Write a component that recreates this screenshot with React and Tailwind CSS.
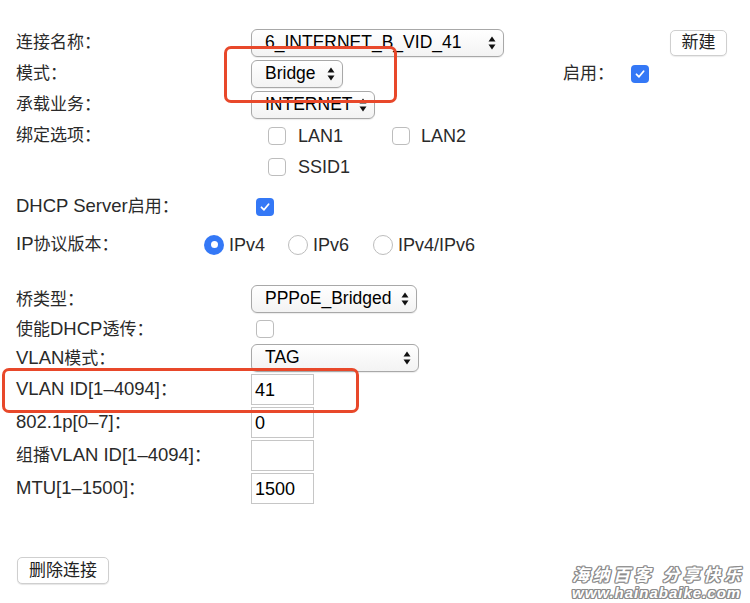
import React from 'react';

const font = 'font-["Liberation_Sans","Noto_Sans_CJK_SC",sans-serif]';

// Latin runs are set a little larger than the CJK glyphs, as the original font does
function Mixed({ text, latin = 'text-[18.5px]' }) {
    const parts = text.match(/[\x20-\x7e\u2013]+|[^\x20-\x7e\u2013]+/g) || [];
    return parts.map((p, i) =>
        /^[\x20-\x7e\u2013]+$/.test(p) ? (
            <span key={i} className={latin}>{p}</span>
        ) : (
            <span key={i}>{p}</span>
        )
    );
}

function Arrows() {
    return (
        <svg width="8" height="14" viewBox="0 0 8 14" className="shrink-0">
            <path d="M4 0.5 L7.5 5.5 L0.5 5.5 Z" fill="#111" />
            <path d="M4 13.5 L7.5 8.5 L0.5 8.5 Z" fill="#111" />
        </svg>
    );
}

function Select({ value, width }) {
    return (
        <div
            className="flex items-center justify-between h-[28px] rounded-[6px] border border-[#a8a8a8] bg-gradient-to-b from-white to-[#f3f3f3] shadow-[0_1px_1px_rgba(0,0,0,0.08)] pl-[13px] pr-[7px] text-[17.5px] text-black leading-none"
            style={{ width }}
        >
            <span>{value}</span>
            <Arrows />
        </div>
    );
}

function Checkbox({ checked }) {
    if (checked) {
        return (
            <div className="w-[18px] h-[18px] rounded-[4px] bg-[#3478f6] flex items-center justify-center shrink-0">
                <svg width="12" height="12" viewBox="0 0 12 12">
                    <path d="M2.5 6.3 L5 8.8 L9.6 3.2" fill="none" stroke="white" strokeWidth="1.8" strokeLinecap="round" strokeLinejoin="round" />
                </svg>
            </div>
        );
    }
    return <div className="w-[18px] h-[18px] rounded-[4px] border border-[#bdbdbd] bg-white shrink-0" />;
}

function Radio({ checked }) {
    if (checked) {
        return (
            <div className="w-[20px] h-[20px] rounded-full bg-[#3478f6] flex items-center justify-center shrink-0">
                <div className="w-[7px] h-[7px] rounded-full bg-white" />
            </div>
        );
    }
    return <div className="w-[20px] h-[20px] rounded-full border border-[#bdbdbd] bg-white shrink-0" />;
}

function Input({ value }) {
    return (
        <div className="w-[63px] h-[31px] border border-[#c6c6c6] bg-white flex items-center pl-[3px] text-[18px] text-black leading-none">
            {value}
        </div>
    );
}

function Label({ text = '', w = 'w-[235px]' }) {
    return (
        <div className={`${w} shrink-0 text-[17px] text-[#2a2a2a] leading-none whitespace-nowrap`}>
            <Mixed text={text} />
        </div>
    );
}

function Option({ text }) {
    return <span className="text-[18px] text-[#2a2a2a] leading-none">{text}</span>;
}

export default function App() {
    return (
        <div className={`relative w-[750px] h-[603px] bg-white overflow-hidden ${font}`}>
            <div className="pt-[27px] pl-4 pr-[23px]">
                {/* 连接名称 */}
                <div className="flex items-center h-[31px]">
                    <Label text="连接名称：" />
                    <Select value="6_INTERNET_B_VID_41" width={253} />
                    <button className="ml-auto h-[26px] w-[57px] rounded-[5px] border border-[#cfcfcf] bg-white shadow-[0_1px_1px_rgba(0,0,0,0.08)] text-[17px] text-[#222] leading-none">
                        新建
                    </button>
                </div>

                {/* 模式 */}
                <div className="flex items-center h-[31px]">
                    <Label text="模式：" />
                    <Select value="Bridge" width={92} />
                    <div className="ml-[220px] w-[68px] text-[17px] text-[#2a2a2a] leading-none">启用：</div>
                    <Checkbox checked />
                </div>

                {/* 承载业务 */}
                <div className="flex items-center h-[31px]">
                    <Label text="承载业务：" />
                    <Select value="INTERNET" width={124} />
                </div>

                {/* 绑定选项 */}
                <div className="flex items-center h-[31px]">
                    <Label text="绑定选项：" />
                    <div className="ml-[17px] w-[124px] flex items-center gap-[12px]">
                        <Checkbox />
                        <Option text="LAN1" />
                    </div>
                    <div className="flex items-center gap-[11px]">
                        <Checkbox />
                        <Option text="LAN2" />
                    </div>
                </div>
                <div className="flex items-center h-[31px]">
                    <Label />
                    <div className="ml-[17px] flex items-center gap-[12px]">
                        <Checkbox />
                        <Option text="SSID1" />
                    </div>
                </div>

                {/* DHCP Server */}
                <div className="flex items-center h-[31px] mt-[9px]">
                    <Label w="w-[240px]" text="DHCP Server启用：" />
                    <Checkbox checked />
                </div>

                {/* IP协议版本 */}
                <div className="flex items-center h-[31px] mt-[7px]">
                    <Label w="w-[188px]" text="IP协议版本：" />
                    <div className="w-[84px] flex items-center gap-[5px]">
                        <Radio checked />
                        <Option text="IPv4" />
                    </div>
                    <div className="w-[85px] flex items-center gap-[5px]">
                        <Radio />
                        <Option text="IPv6" />
                    </div>
                    <div className="flex items-center gap-[5px]">
                        <Radio />
                        <Option text="IPv4/IPv6" />
                    </div>
                </div>

                {/* 桥类型 */}
                <div className="flex items-center h-[30px] mt-[24px]">
                    <Label text="桥类型：" />
                    <Select value="PPPoE_Bridged" width={166} />
                </div>
                <div className="flex items-center h-[30px]">
                    <Label w="w-[240px]" text="使能DHCP透传：" />
                    <Checkbox />
                </div>
                <div className="flex items-center h-[28px]">
                    <Label text="VLAN模式：" />
                    <Select value="TAG" width={168} />
                </div>

                {/* 输入项 */}
                <div className="mt-[1px]">
                    <div className="flex items-center h-[33px]">
                        <Label text="VLAN ID[1–4094]：" />
                        <Input value="41" />
                    </div>
                    <div className="flex items-center h-[33px]">
                        <Label text="802.1p[0–7]：" />
                        <Input value="0" />
                    </div>
                    <div className="flex items-center h-[33px]">
                        <Label text="组播VLAN ID[1–4094]：" />
                        <Input value="" />
                    </div>
                    <div className="flex items-center h-[33px]">
                        <Label text="MTU[1–1500]：" />
                        <Input value="1500" />
                    </div>
                </div>

                <button className="mt-[52px] ml-[1px] h-[27px] w-[92px] rounded-[5px] border border-[#cfcfcf] bg-white shadow-[0_1px_1px_rgba(0,0,0,0.1)] text-[17px] text-[#222] leading-none">
                    删除连接
                </button>
            </div>

            {/* 红框标注 */}
            <div className="absolute left-[224px] top-[46px] w-[173px] h-[57px] rounded-[7px] border-[3px] border-[#e8482a]" />
            <div className="absolute left-[2px] top-[368px] w-[357px] h-[45px] rounded-[7px] border-[3px] border-[#e8482a]" />

            {/* 水印 */}
            <div className="absolute left-[572px] top-[567px] italic font-bold text-white leading-none [text-shadow:1.2px_0_#8c8c8c,-1.2px_0_#8c8c8c,0_1.2px_#8c8c8c,0_-1.2px_#8c8c8c,1px_1px_#8c8c8c,-1px_-1px_#8c8c8c,1px_-1px_#8c8c8c,-1px_1px_#8c8c8c]">
                <div className="text-[17px] tracking-[3.5px]">海纳百客 分享快乐</div>
                <div className="text-[15px] tracking-[1px] mt-[1px]">www.hainabaike.com</div>
            </div>
        </div>
    );
}
